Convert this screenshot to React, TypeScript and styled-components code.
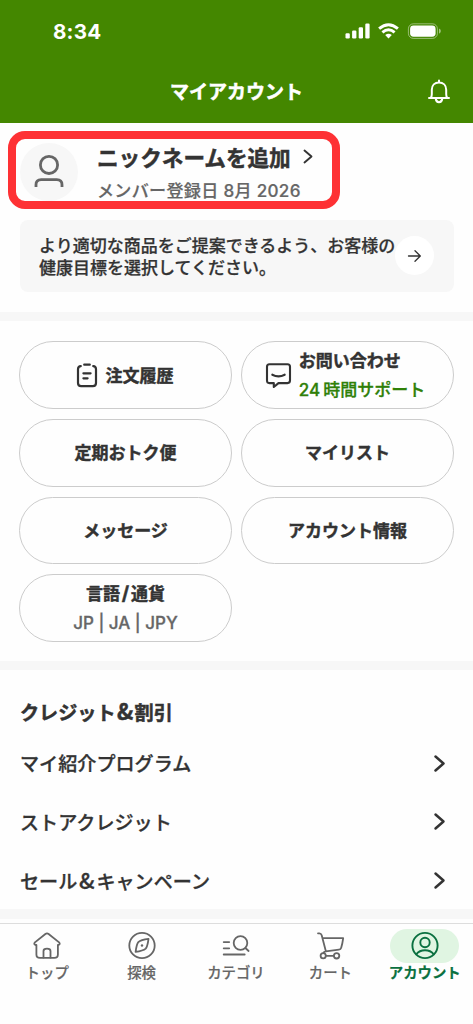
import React from "react";
import styled, { createGlobalStyle } from "styled-components";

const GlobalStyle = createGlobalStyle`
  * { box-sizing: border-box; }
  body {
    margin: 0;
    background: #fefefe;
    color: #333;
    font-family: Inter, "Noto Sans CJK JP", sans-serif;
  }
`;

const Screen = styled.div`
  width: 473px;
  height: 1024px;
  display: flex;
  flex-direction: column;
  overflow: hidden;
  background: #fefefe;
`;

const Header = styled.header`
  height: 122.6px;
  flex: none;
  background: #448700;
  color: #fff;
`;

const StatusBar = styled.div`
  height: 62px;
  display: flex;
  align-items: center;
  justify-content: space-between;
  padding: 0 32px 0 53px;
`;

const Clock = styled.div`
  padding-top: 1px;
  font-size: 20.6px;
  font-weight: 700;
  line-height: 24px;
  letter-spacing: 0.2px;
`;

const StatusIcons = styled.div`
  display: flex;
  align-items: center;
`;

const TitleBar = styled.div`
  height: 60px;
  display: grid;
  grid-template-columns: 48px 1fr 48px;
  align-items: center;
  padding: 0 10px;
`;

const Title = styled.h1`
  grid-column: 2;
  margin: 0;
  padding-top: 2px;
  text-align: center;
  font-size: 19px;
  font-weight: 700;
  line-height: 28px;
  -webkit-text-stroke: 0.5px currentColor;
`;

const BellButton = styled.div`
  display: flex;
  justify-content: center;
`;

const Profile = styled.section`
  position: relative;
  height: 97.4px;
  flex: none;
  display: flex;
  align-items: flex-start;
  gap: 19px;
  padding: 20px 20px 0;
`;

const Highlight = styled.div`
  position: absolute;
  left: 7.5px;
  top: 8.6px;
  width: 332.5px;
  height: 78px;
  border: 8px solid #fe3134;
  border-radius: 17px;
`;

const Avatar = styled.div`
  width: 58px;
  height: 58px;
  border-radius: 50%;
  background: #f7f7f7;
  display: flex;
  align-items: center;
  justify-content: center;
  padding-right: 1px;
`;

const ProfileText = styled.div`
  display: flex;
  flex-direction: column;
`;

const Nickname = styled.div`
  display: flex;
  align-items: center;
  gap: 13px;
  height: 28px;
  font-size: 21.6px;
  font-weight: 700;
  -webkit-text-stroke: 0.5px currentColor;
  white-space: nowrap;
`;

const MemberSince = styled.div`
  margin-top: 7px;
  line-height: 26px;
  font-size: 17.1px;
  font-weight: 500;
  color: #666;
  letter-spacing: 0.28px;
  -webkit-text-stroke: 0.2px #666;
  white-space: nowrap;
`;

const GoalCard = styled.section`
  height: 72px;
  flex: none;
  margin: 0 19.5px;
  border-radius: 8px;
  background: #f7f7f7;
  display: flex;
  align-items: center;
  justify-content: space-between;
  padding: 0 19.5px;
`;

const GoalText = styled.p`
  margin: 0;
  padding-top: 2px;
  font-size: 17px;
  font-weight: 500;
  line-height: 22px;
  -webkit-text-stroke: 0.25px currentColor;
  white-space: nowrap;
`;

const RoundArrow = styled.div`
  width: 39px;
  height: 39px;
  flex: none;
  border-radius: 50%;
  background: #fff;
  display: flex;
  align-items: center;
  justify-content: center;
`;

const Divider = styled.div<{ $top: number }>`
  height: 9.5px;
  flex: none;
  margin-top: ${(p) => p.$top}px;
  background: #f7f7f7;
`;

const ButtonGrid = styled.section`
  display: grid;
  flex: none;
  grid-template-columns: 213px 213px;
  grid-auto-rows: 67.6px;
  gap: 10px 9px;
  padding: 20px 19px 0;
`;

const Pill = styled.div<{ $gap?: number; $shift?: number }>`
  border: 1.3px solid #ccc;
  border-radius: 34px;
  display: flex;
  align-items: center;
  justify-content: center;
  gap: ${(p) => p.$gap ?? 0}px;
  padding-right: ${(p) => p.$shift ?? 0}px;
`;

const PillStack = styled.div<{ $center?: boolean }>`
  display: flex;
  flex-direction: column;
  align-items: ${(p) => (p.$center ? "center" : "flex-start")};
`;

const PillLabel = styled.div`
  padding-top: 1px;
  font-size: 17px;
  font-weight: 700;
  line-height: 28.5px;
  -webkit-text-stroke: 0.45px currentColor;
  white-space: nowrap;
`;

const Slash = styled.span`
  margin: 0 1.8px;
  font-size: 19px;
  line-height: 1;
`;

const PillSub = styled.div<{ $color: string }>`
  font-size: 17px;
  font-weight: 500;
  line-height: 28.5px;
  color: ${(p) => p.$color};
  -webkit-text-stroke: 0.3px currentColor;
  white-space: nowrap;
`;

const Hours = styled.span`
  margin-right: 3px;
`;

const Section = styled.section`
  flex: none;
  padding: 25px 20px 0;
`;

const SectionTitle = styled.h2`
  margin: 0;
  font-size: 19.1px;
  font-weight: 700;
  line-height: 36px;
  -webkit-text-stroke: 0.5px currentColor;
`;

const Ampersand = styled.span`
  display: inline-block;
  width: 19.1px;
  text-align: center;
  font-family: "Noto Sans CJK JP", sans-serif;
  font-size: 22px;
  line-height: 1;
`;

const MenuRow = styled.div`
  height: 58.7px;
  display: flex;
  align-items: center;
  justify-content: space-between;
  padding: 5px 9px 0 0;
  font-size: 19.1px;
  font-weight: 500;
  -webkit-text-stroke: 0.3px currentColor;
  white-space: nowrap;
`;

const TabBar = styled.nav`
  height: 101px;
  flex: none;
  margin-top: auto;
  border-top: 1.4px solid #ddd;
  display: grid;
  grid-template-columns: repeat(5, 94.4px);
  padding-top: 5px;
`;

const Tab = styled.div<{ $active?: boolean }>`
  display: flex;
  flex-direction: column;
  align-items: center;
  color: ${(p) => (p.$active ? "#0a7040" : "#666")};
  font-size: 14.4px;
  font-weight: ${(p) => (p.$active ? 700 : 500)};
  line-height: 20px;
  -webkit-text-stroke: 0.2px currentColor;
  white-space: nowrap;
`;

const TabIcon = styled.div<{ $active?: boolean }>`
  width: 69px;
  height: 34px;
  border-radius: 17px;
  background: ${(p) => (p.$active ? "#e0f5e2" : "transparent")};
  display: flex;
  align-items: center;
  justify-content: center;
`;

const Stroke = styled.svg`
  display: block;
  flex: none;
  overflow: visible;
  fill: none;
  stroke: currentColor;
  stroke-linecap: round;
  stroke-linejoin: round;
`;

const Chevron = ({ w, h, s }: { w: number; h: number; s: number }) => (
  <Stroke width={w} height={h} viewBox={`0 0 ${w} ${h}`} strokeWidth={s}>
    <path d={`M0.5 0.5 L${w - 0.5} ${h / 2} L0.5 ${h - 0.5}`} />
  </Stroke>
);

const StatusGlyphs = () => (
  <svg width="96" height="18" viewBox="0 0 96 18" fill="#fff">
    <rect x="0.5" y="11.2" width="4.3" height="5.3" rx="1.2" />
    <rect x="7.1" y="8.5" width="4.3" height="8" rx="1.2" />
    <rect x="13.7" y="5.2" width="4.3" height="11.3" rx="1.2" />
    <rect x="20.3" y="1.5" width="4.3" height="15" rx="1.2" />
    <g fill="none" stroke="#fff" strokeWidth="2.9">
      <path d="M34.1 6.7 Q43.5 -1.3 52.9 6.7" />
      <path d="M37.4 10.4 Q43.5 5.3 49.6 10.4" />
    </g>
    <path d="M40.2 13.1 Q43.5 10.5 46.8 13.1 L43.5 16.5 Z" />
    <rect x="63.4" y="1.8" width="29" height="14.6" rx="5" fill="none" stroke="#fff" strokeOpacity=".45" />
    <rect x="65.1" y="3.5" width="25.5" height="11.2" rx="3.4" />
    <path d="M94 6.5 Q95.9 7.3 95.9 9.1 T94 11.7 Z" fillOpacity=".5" />
  </svg>
);

const BellIcon = () => (
  <Stroke width="22" height="24" viewBox="0 0 22 24" strokeWidth="2">
    <path d="M11 .4 V2.3 M1 18.1 H21 M2.7 17.8 Q3.8 16.5 3.8 14.2 V9.7 C3.8 5.3 6.8 2.4 11 2.4 C15.2 2.4 18.2 5.3 18.2 9.7 V14.2 Q18.2 16.5 19.3 17.8" />
    <path d="M7.7 18.5 Q8.2 22.2 11 22.2 Q13.8 22.2 14.3 18.5" />
  </Stroke>
);

const PersonIcon = () => (
  <Stroke width="30" height="33" viewBox="0 0 30 33" strokeWidth="2.8" color="#666" style={{ strokeLinecap: "butt" }}>
    <circle cx="15" cy="9.9" r="8.6" />
    <path d="M2 32 V29.7 Q2 24.6 7.2 24.6 H22.8 Q28 24.6 28 29.7 V32" />
  </Stroke>
);

const ArrowIcon = () => (
  <Stroke width="13" height="12" viewBox="0 0 13 12" strokeWidth="1.3">
    <path d="M.5 6 H12.2 M7 .7 L12.3 6 L7 11.3" />
  </Stroke>
);

const ClipboardIcon = () => (
  <Stroke width="20" height="24" viewBox="0 0 20 24" strokeWidth="2.2">
    <path d="M3.8 3.1 Q1 3.3 1 6.2 V20 Q1 23.1 4.1 23.1 H15.9 Q19 23.1 19 20 V6.2 Q19 3.3 16.2 3.1 M7.2 1.7 H12.8 M6.4 10.3 H13.6 M6.4 15.3 H10.6" />
  </Stroke>
);

const ChatIcon = () => (
  <Stroke width="25" height="25" viewBox="0 0 25 25" strokeWidth="2.1">
    <path d="M3.5 1.3 H21.5 Q24 1.3 24 3.8 V17.6 Q24 20.1 21.5 20.1 H12.5 L7.8 24 V20.1 H3.5 Q1 20.1 1 17.6 V3.8 Q1 1.3 3.5 1.3 Z M6.3 11.7 Q12.5 15 18.7 11.7" />
  </Stroke>
);

const HomeIcon = () => (
  <Stroke width="28" height="28" viewBox="0 0 28 28" strokeWidth="1.8">
    <path d="M3.4 13 H2.4 Q.4 12.1 1.9 10.4 L12.4 2 Q14 .7 15.6 2 L26.1 10.4 Q27.6 12.1 25.6 13 H24.9 V22.5 Q24.9 25.9 21.4 25.9 H6.9 Q3.4 25.9 3.4 22.5 Z" />
    <path d="M10.5 25.6 V19.1 Q10.5 16.7 14 16.7 Q17.5 16.7 17.5 19.1 V25.6" />
  </Stroke>
);

const CompassIcon = () => (
  <Stroke width="28" height="28" viewBox="0 0 28 28" strokeWidth="1.8">
    <circle cx="14" cy="13.5" r="12.7" />
    <path d="M20.5 6.8 Q13 7.7 10.3 10.1 Q8.6 12 7.6 19.9 Q15 18.9 17.7 16.6 Q19.5 14.5 20.5 6.8 Z" />
    <circle cx="14" cy="13.5" r="1.2" fill="currentColor" stroke="none" />
  </Stroke>
);

const CategoryIcon = () => (
  <Stroke width="28" height="28" viewBox="0 0 28 28" strokeWidth="1.8">
    <circle cx="18.5" cy="11" r="6.8" />
    <path d="M23.4 16 L26.6 19 M1.7 10.1 H7.2 M1.7 16.3 H7.2 M1.7 22.5 H22.7" />
  </Stroke>
);

const CartIcon = () => (
  <Stroke width="28" height="28" viewBox="0 0 28 28" strokeWidth="1.8">
    <path d="M2 1.3 H3.4 Q5.1 1.3 5.7 3.2 L9.6 18.2 M6.7 6.2 H27.2 Q26.4 12 25.2 15.8 Q24.7 17.5 22.9 17.7 L9.8 19.3 Q7.8 19.7 7.4 21.1 M10.2 23.8 H17.6" />
    <circle cx="7.2" cy="23.8" r="2.6" />
    <circle cx="20.6" cy="23.8" r="2.7" />
  </Stroke>
);

const AccountIcon = () => (
  <Stroke width="28" height="28" viewBox="0 0 28 28" strokeWidth="1.9">
    <circle cx="14" cy="13.5" r="12.6" />
    <circle cx="14" cy="10.5" r="4.7" />
    <path d="M5.2 22.3 Q8.4 18.3 14 18.3 Q19.6 18.3 22.8 22.3" />
  </Stroke>
);

const links: { key: string; text: React.ReactNode }[] = [
  { key: "referral", text: "マイ紹介プログラム" },
  { key: "credit", text: "ストアクレジット" },
  {
    key: "sale",
    text: (
      <>
        セール<Ampersand>&amp;</Ampersand>キャンペーン
      </>
    ),
  },
];

const tabs = [
  { label: "トップ", Icon: HomeIcon },
  { label: "探検", Icon: CompassIcon },
  { label: "カテゴリ", Icon: CategoryIcon },
  { label: "カート", Icon: CartIcon },
  { label: "アカウント", Icon: AccountIcon, active: true },
];

export default function App() {
  return (
    <>
      <GlobalStyle />
      <Screen>
        <Header>
          <StatusBar>
            <Clock>8:34</Clock>
            <StatusIcons>
              <StatusGlyphs />
            </StatusIcons>
          </StatusBar>
          <TitleBar>
            <Title>マイアカウント</Title>
            <BellButton>
              <BellIcon />
            </BellButton>
          </TitleBar>
        </Header>

        <Profile>
          <Avatar>
            <PersonIcon />
          </Avatar>
          <ProfileText>
            <Nickname>
              ニックネームを追加
              <Chevron w={8} h={13} s={1.9} />
            </Nickname>
            <MemberSince>メンバー登録日 8月 2026</MemberSince>
          </ProfileText>
          <Highlight />
        </Profile>

        <GoalCard>
          <GoalText>
            より適切な商品をご提案できるよう、お客様の
            <br />
            健康目標を選択してください。
          </GoalText>
          <RoundArrow>
            <ArrowIcon />
          </RoundArrow>
        </GoalCard>

        <Divider $top={20} />

        <ButtonGrid>
          <Pill $gap={9} $shift={1}>
            <ClipboardIcon />
            <PillLabel>注文履歴</PillLabel>
          </Pill>
          <Pill $gap={8} $shift={4}>
            <ChatIcon />
            <PillStack>
              <PillLabel>お問い合わせ</PillLabel>
              <PillSub $color="#2f8008">
                <Hours>24</Hours>時間サポート
              </PillSub>
            </PillStack>
          </Pill>
          <Pill>
            <PillLabel>定期おトク便</PillLabel>
          </Pill>
          <Pill>
            <PillLabel>マイリスト</PillLabel>
          </Pill>
          <Pill>
            <PillLabel>メッセージ</PillLabel>
          </Pill>
          <Pill>
            <PillLabel>アカウント情報</PillLabel>
          </Pill>
          <Pill>
            <PillStack $center>
              <PillLabel>
                言語<Slash>/</Slash>通貨
              </PillLabel>
              <PillSub $color="#666">JP | JA | JPY</PillSub>
            </PillStack>
          </Pill>
        </ButtonGrid>

        <Divider $top={19} />

        <Section>
          <SectionTitle>
            クレジット<Ampersand>&amp;</Ampersand>割引
          </SectionTitle>
          {links.map(({ key, text }) => (
            <MenuRow key={key}>
              <span>{text}</span>
              <Chevron w={9} h={15} s={2.5} />
            </MenuRow>
          ))}
        </Section>

        <Divider $top={2} />

        <TabBar>
          {tabs.map(({ label, Icon, active }) => (
            <Tab key={label} $active={active}>
              <TabIcon $active={active}>
                <Icon />
              </TabIcon>
              {label}
            </Tab>
          ))}
        </TabBar>
      </Screen>
    </>
  );
}
